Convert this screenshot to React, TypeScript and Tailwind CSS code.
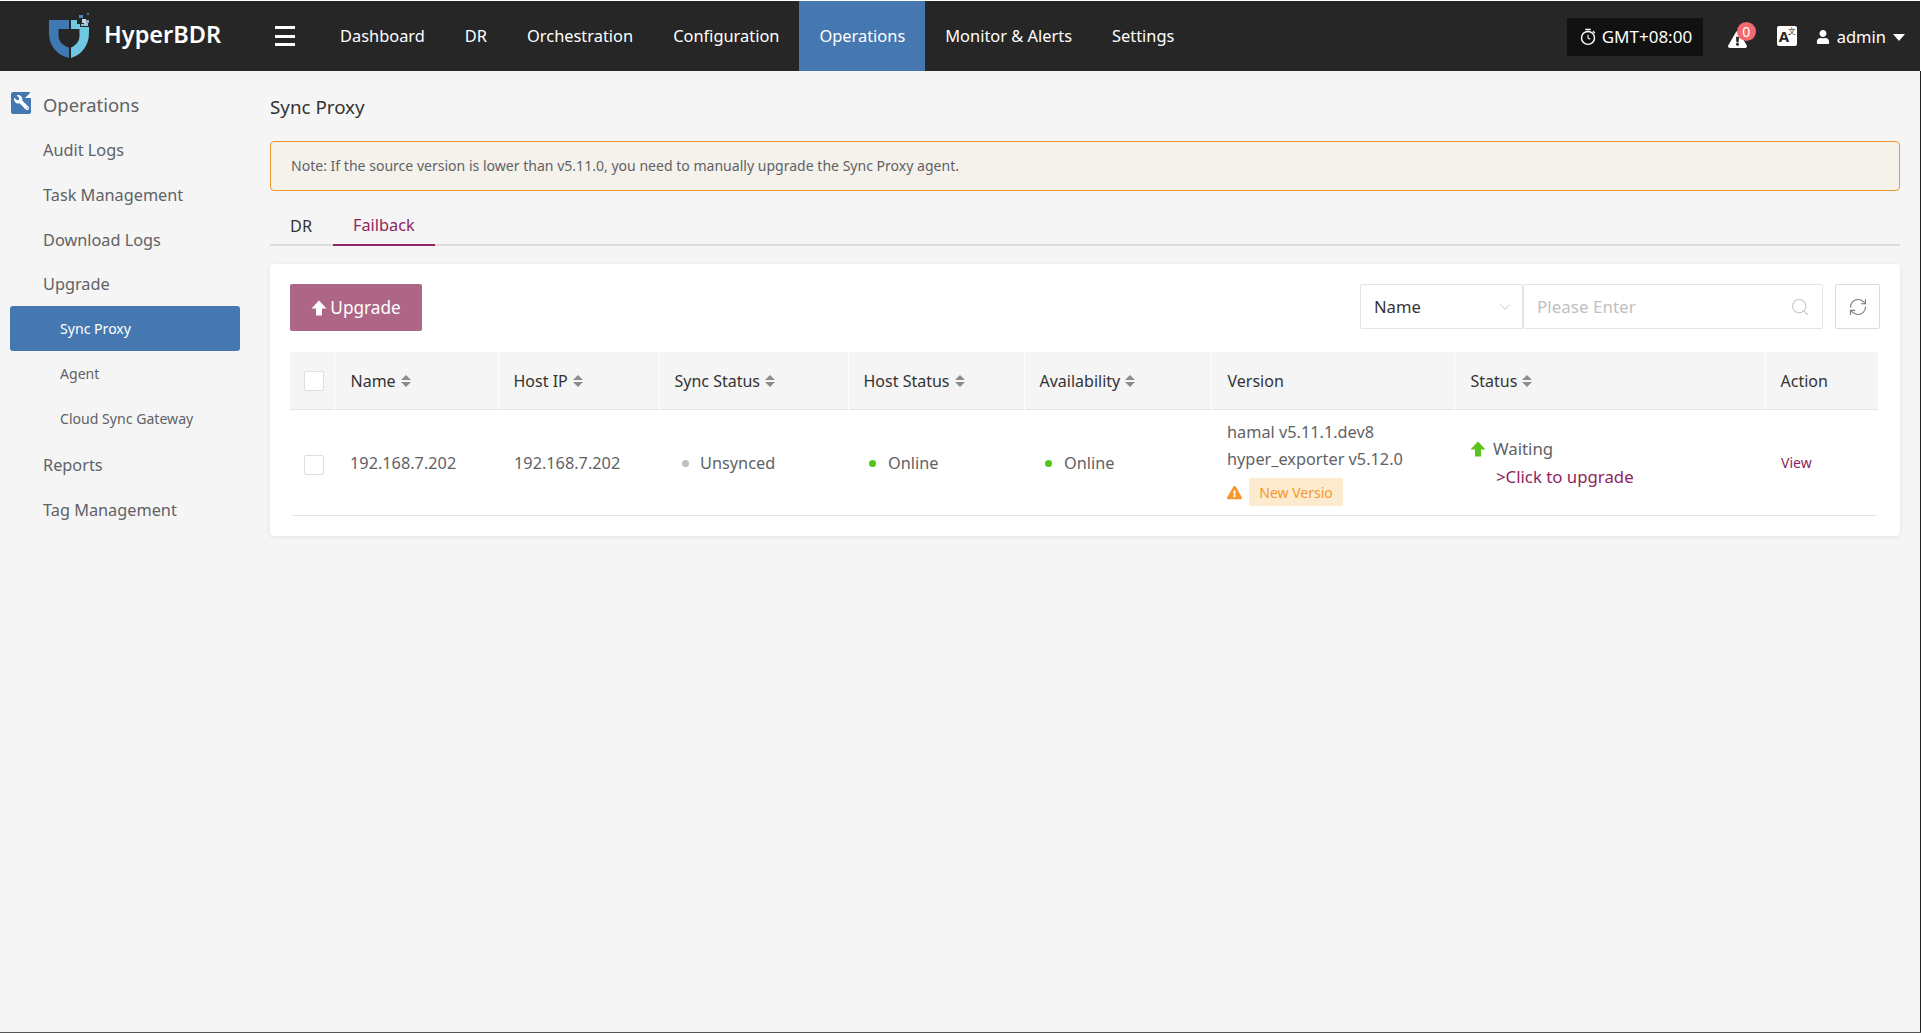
import { FaExclamationTriangle, FaUser, FaWrench } from "react-icons/fa";
import { ChevronDown, RefreshCw, Search } from "lucide-react";

const NAV_ITEMS = ["Dashboard", "DR", "Orchestration", "Configuration", "Operations", "Monitor & Alerts", "Settings"];

const COLUMNS = [
  { title: "Name", width: "w-[164px] pl-[16px]", sortable: true },
  { title: "Host IP", width: "w-[161px] pl-[15px]", sortable: true },
  { title: "Sync Status", width: "w-[189px] pl-[15px]", sortable: true },
  { title: "Host Status", width: "w-[176px] pl-[15px]", sortable: true },
  { title: "Availability", width: "w-[187px] pl-[15px]", sortable: true },
  { title: "Version", width: "w-[243px] pl-[16px]", sortable: false },
  { title: "Status", width: "w-[311px] pl-[16px]", sortable: true },
  { title: "Action", width: "w-[113px] pl-[15px]", sortable: false },
];

function Logo() {
  return (
    <svg viewBox="0 0 44 48" className="h-[48px] w-[44px]">
      <path d="M1 8 H21 V17 H10.5 V24 C10.5 29 14.5 33.5 21 35.5 V46 C9 43 1 34 1 21 Z" fill="#3f79b3" />
      <path d="M23 46 V35.5 C28 33.5 31.5 29 31.5 24 V17 H23 V8 H29 V12 H32 V15 H41 V21 C41 34 33 43 23 46 Z" fill="#6fc8e2" />
      <rect x="31" y="3" width="4" height="3" fill="#4f86bd" />
      <rect x="39" y="1" width="2" height="2" fill="#3f79b3" />
      <rect x="34" y="7" width="4" height="4" fill="#c7d6e6" />
      <rect x="38" y="8" width="3" height="3" fill="#8fa9c9" />
      <rect x="36" y="11" width="4" height="3" fill="#a9c2dc" />
      <rect x="33" y="12" width="3" height="2" fill="#6fc8e2" />
    </svg>
  );
}

function Stopwatch() {
  return (
    <svg viewBox="0 0 20 20" className="h-[18px] w-[18px]" fill="none" stroke="white" strokeWidth="1.6">
      <circle cx="10" cy="11" r="7.2" />
      <path d="M10 7.5 V11 L12.5 12.5" strokeWidth="1.2" />
      <path d="M7 1.6 H13 M15.5 3.5 L17.5 5.5" />
    </svg>
  );
}

function BoldArrowUp({ className }: { className: string }) {
  return (
    <svg viewBox="0 0 16 16" className={className} fill="currentColor">
      <path d="M8 0.5 L15.5 8.5 H11 V15.5 H5 V8.5 H0.5 Z" />
    </svg>
  );
}

function OpsIcon() {
  return (
    <span className="relative ml-[1px] mr-[12px] mt-[-4px] flex h-[22px] w-[20px] items-center justify-center rounded-[2px] bg-[#4578b0]">
      <FaWrench className="h-[15px] w-[15px] -scale-x-100 text-white" />
      <span className="absolute right-0 top-0 h-0 w-0 border-b-[6px] border-l-[6px] border-b-white border-l-transparent" />
    </span>
  );
}

function SortCarets() {
  return (
    <span className="ml-[5px] inline-flex flex-col gap-[2px]">
      <span className="h-0 w-0 border-x-[5px] border-b-[5px] border-x-transparent border-b-[#8c8c8c]" />
      <span className="h-0 w-0 border-x-[5px] border-t-[5px] border-x-transparent border-t-[#8c8c8c]" />
    </span>
  );
}

function Checkbox() {
  return <span className="block h-[20px] w-[20px] rounded-[2px] border border-[#dcdfe6] bg-white" />;
}

function Header() {
  return (
    <header className="flex h-[71px] items-center border-t border-r border-white bg-[#262626] text-white">
      <div className="ml-[48px] flex w-[227px] items-center">
        <Logo />
        <span className="ml-[12px] mt-[-2px] text-[23.5px] font-semibold">HyperBDR</span>
      </div>
      <div className="flex w-[45px] flex-col gap-[5.5px]">
        <span className="h-[3px] w-[20px] bg-white" />
        <span className="h-[3px] w-[20px] bg-white" />
        <span className="h-[3px] w-[20px] bg-white" />
      </div>
      <nav className="flex h-full">
        {NAV_ITEMS.map((item) => (
          <a
            key={item}
            className={
              item === "Operations"
                ? "flex items-center bg-[#4578b0] px-[20px] pt-[1px] text-[16.4px]"
                : "flex items-center px-[20px] pt-[1px] text-[16.4px]"
            }
          >
            {item}
          </a>
        ))}
      </nav>
      <div className="ml-auto flex items-center pr-[15px] pt-[2px]">
        <div className="flex h-[38px] w-[136px] items-center gap-[5px] bg-[#111111] pl-[12px] text-[17px]">
          <Stopwatch />
          GMT+08:00
        </div>
        <div className="relative ml-[25px] mt-[6px] h-[20px] w-[19px]">
          <FaExclamationTriangle className="h-[19px] w-[19px]" />
          <span className="absolute left-[9px] top-[-8px] flex h-[19px] w-[19px] items-center justify-center rounded-full bg-[#f16a6f] text-[14px]">
            0
          </span>
        </div>
        <div className="relative ml-[30px] mt-[-2px] h-[20px] w-[20px] rounded-[2px] bg-white text-[#262626]">
          <span className="absolute left-[2px] top-[1px] text-[15px] font-bold leading-[18px]">A</span>
          <span className="absolute right-[1px] top-0 text-[8px] leading-[10px]">文</span>
        </div>
        <FaUser className="ml-[19px] h-[14px] w-[14px]" />
        <span className="ml-[7px] text-[16.5px]">admin</span>
        <span className="ml-[7px] h-0 w-0 border-x-[6px] border-t-[7px] border-x-transparent border-t-white" />
      </div>
    </header>
  );
}

function Sidebar() {
  const top = "flex items-center pl-[33px] pt-[1px] text-[16.3px] text-[#5f6266]";
  const sub = "flex h-[45px] items-center pl-[50px] text-[14.1px] text-[#5f6266]";
  return (
    <aside className="w-[270px] shrink-0 pl-[10px] pr-[30px] pt-[11px]">
      <div className="flex h-[45px] items-center text-[18.4px] text-[#5f6266]">
        <OpsIcon />
        Operations
      </div>
      <div className={`${top} h-[45px]`}>Audit Logs</div>
      <div className={`${top} h-[45px]`}>Task Management</div>
      <div className={`${top} h-[45px]`}>Download Logs</div>
      <div className={`${top} h-[44px]`}>Upgrade</div>
      <div className={`${sub} rounded-[3px] bg-[#4578b0] !text-white`}>Sync Proxy</div>
      <div className={sub}>Agent</div>
      <div className={`${sub} !h-[46px]`}>Cloud Sync Gateway</div>
      <div className={`${top} h-[45px]`}>Reports</div>
      <div className={`${top} h-[45px]`}>Tag Management</div>
    </aside>
  );
}

function SyncTable() {
  return (
    <>
      <table className="mt-[21px] w-[1588px] table-fixed border-collapse text-[16px]">
        <thead>
          <tr className="h-[57px] border-b border-[#e4e4e4] bg-[#f5f5f5] text-left text-[#333333]">
            <th className="w-[44px] border-r border-white pl-[14px] pt-[2px] font-normal">
              <Checkbox />
            </th>
            {COLUMNS.map((col, i) => (
              <th
                key={col.title}
                className={
                  i === COLUMNS.length - 1
                    ? `${col.width} pt-[2px] font-normal`
                    : `${col.width} border-r border-white pt-[2px] font-normal`
                }
              >
                <span className="flex items-center">
                  {col.title}
                  {col.sortable && <SortCarets />}
                </span>
              </th>
            ))}
          </tr>
        </thead>
        <tbody className="text-[16.3px] text-[#5f6266]">
          <tr className="h-[106px]">
            <td className="pl-[14px] pt-[6px]">
              <Checkbox />
            </td>
            <td className="px-[16px] pt-[2px]">192.168.7.202</td>
            <td className="px-[16px] pt-[2px]">192.168.7.202</td>
            <td className="px-[16px] pt-[2px]">
              <span className="flex items-center">
                <span className="ml-[7px] mr-[11px] h-[7px] w-[7px] rounded-full bg-[#bfbfbf]" />
                Unsynced
              </span>
            </td>
            <td className="px-[16px] pt-[2px]">
              <span className="flex items-center">
                <span className="ml-[5px] mr-[12px] h-[7px] w-[7px] rounded-full bg-[#52c41a]" />
                Online
              </span>
            </td>
            <td className="px-[16px] pt-[2px]">
              <span className="flex items-center">
                <span className="ml-[5px] mr-[12px] h-[7px] w-[7px] rounded-full bg-[#52c41a]" />
                Online
              </span>
            </td>
            <td className="px-[16px] pt-[1px]">
              <div className="leading-[27px]">hamal v5.11.1.dev8</div>
              <div className="leading-[27px]">hyper_exporter v5.12.0</div>
              <div className="mt-[5px] flex items-center">
                <FaExclamationTriangle className="h-[15px] w-[15px] text-[#f7962f]" />
                <span className="ml-[7px] flex h-[28px] w-[94px] items-center justify-center bg-[#fdebd0] text-[14px] text-[#f7962f]">
                  New Versio
                </span>
              </div>
            </td>
            <td className="px-[16px] pt-[2px] text-[16.8px]">
              <div className="flex items-center leading-[28px]">
                <BoldArrowUp className="mr-[7px] h-[16px] w-[16px] text-[#5ac31a]" />
                Waiting
              </div>
              <div className="pl-[26px] leading-[28px] text-[#8e2560]">&gt;Click to upgrade</div>
            </td>
            <td className="pl-[16px] text-[14px] text-[#8e2560]">View</td>
          </tr>
        </tbody>
      </table>
      <div className="ml-[3px] h-px w-[1584px] bg-[#e4e4e4]" />
    </>
  );
}

export default function App() {
  return (
    <div className="h-[1033px] border-b border-[#555555] bg-[#f5f5f5] font-['Noto_Sans',sans-serif]">
      <Header />
      <div className="flex h-[961px] border-r border-[#222222]">
        <Sidebar />
        <main className="w-[1630px] pt-[22px]">
          <h1 className="text-[18.8px] font-normal leading-[28px] text-[#333333]">Sync Proxy</h1>
          <div className="mt-[20px] flex h-[50px] items-center rounded-[4px] border border-[#f0962f] bg-[#f5f2eb] pb-[1px] pl-[20px] text-[14.05px] text-[#5f6266]">
            Note: If the source version is lower than v5.11.0, you need to manually upgrade the Sync Proxy agent.
          </div>
          <div className="mt-[15px] flex h-[40px] border-b-2 border-[#dcdcdc] text-[16.3px]">
            <div className="flex h-[40px] items-center pl-[20px] pr-[21px] pt-[1px] text-[#333333]">DR</div>
            <div className="flex h-[40px] items-center border-b-2 border-[#8e2560] px-[20px] pt-[1px] text-[#8e2560]">
              Failback
            </div>
          </div>
          <section className="mt-[18px] h-[272px] rounded-[4px] bg-white pl-[20px] pt-[20px] shadow-[0_1px_4px_rgba(0,0,0,0.08)]">
            <div className="flex h-[47px] items-start">
              <button className="flex h-[47px] w-[132px] items-center justify-center gap-[3px] rounded-[2px] bg-[#ae6686] text-[17.2px] text-white">
                <BoldArrowUp className="h-[16px] w-[16px]" />
                Upgrade
              </button>
              <div className="ml-auto flex h-[45px] pr-[20px]">
                <div className="flex w-[163px] items-center justify-between rounded-[2px] border border-[#e4e4e4] pl-[13px] pr-[8px] pt-[1px] text-[16.6px] text-[#333333]">
                  Name
                  <ChevronDown className="h-[18px] w-[18px] text-[#bfbfbf]" strokeWidth={1.2} />
                </div>
                <div className="flex w-[300px] items-center justify-between rounded-[2px] border border-[#e4e4e4] pl-[13px] pr-[12px] text-[17px] text-[#bfbfbf]">
                  Please Enter
                  <Search className="h-[20px] w-[20px] text-[#c8c8c8]" strokeWidth={1.4} />
                </div>
                <div className="ml-[12px] flex w-[45px] items-center justify-center rounded-[2px] border border-[#dcdcdc]">
                  <RefreshCw className="h-[20px] w-[20px] text-[#7a7a7a]" strokeWidth={1.3} />
                </div>
              </div>
            </div>
            <SyncTable />
          </section>
        </main>
      </div>
    </div>
  );
}
